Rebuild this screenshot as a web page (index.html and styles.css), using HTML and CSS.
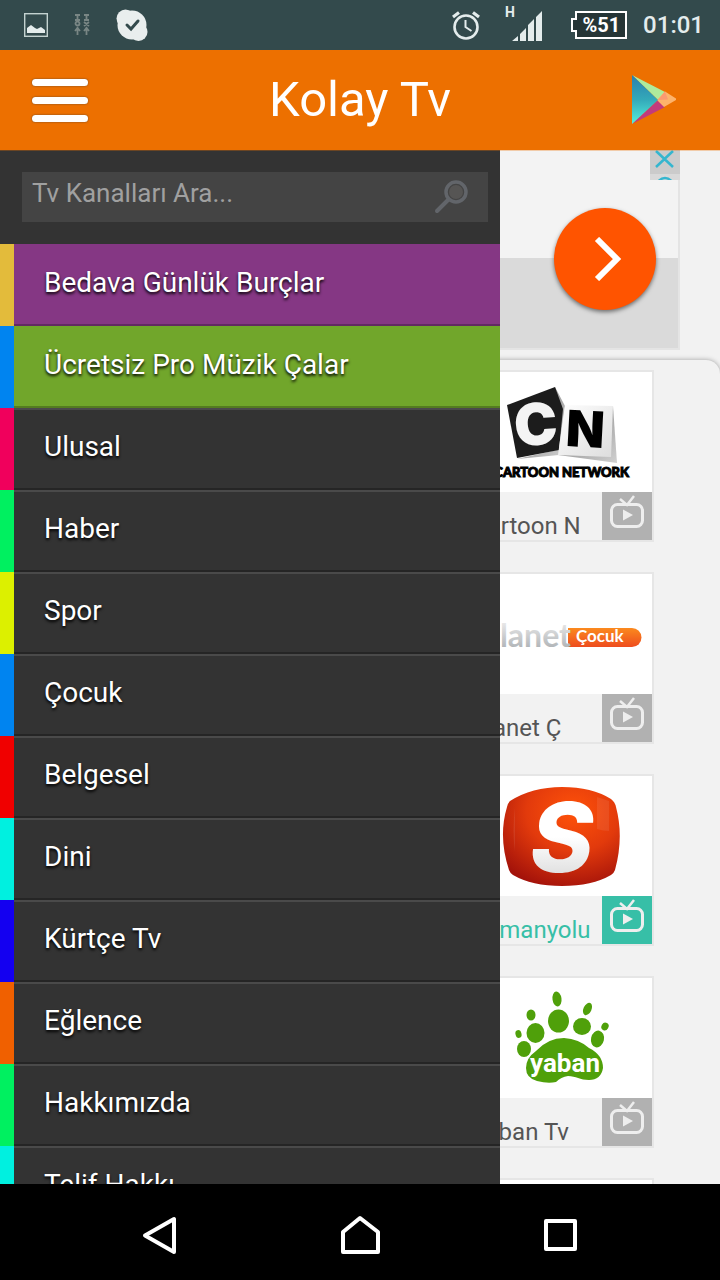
FILE: index.html
```html
<!DOCTYPE html>
<html lang="tr">

<head>
    <meta charset="UTF-8" />
    <meta name="viewport" content="width=device-width, initial-scale=1.0" />
    <title>Kolay Tv</title>
    <link rel="stylesheet" href="styles.css">
</head>

<body>
    <svg class="defs" width="0" height="0" aria-hidden="true">
        <symbol id="tv" viewBox="0 0 50 48">
            <path d="M18 7l7 6l7-9" fill="none" stroke="currentColor" stroke-width="2.500" />
            <rect x="9.500" y="12.500" width="31" height="22" rx="6" fill="none" stroke="currentColor" stroke-width="3" />
            <path d="M21 17.500v11l10-5.500z" fill="currentColor" />
        </symbol>
    </svg>

    <div class="status-bar">
        <div class="status-left">
            <svg width="24" height="24" viewBox="0 0 24 24">
                <rect x="0.700" y="0.700" width="22.600" height="22.600" fill="none" stroke="#c3d2d0" stroke-width="1.400" />
                <path d="M3 20v-5l4-3l4 3l2 1l4-2l4 3v3z" fill="#e4ecec" />
            </svg>
            <svg width="16" height="22" viewBox="0 0 16 22" fill="none" stroke="#798684" stroke-width="1.800">
                <path d="M1 1h5M3.500 1v5M1 6h5M10 1h5M12.500 1v5M10 6h5M10 8l5 4M15 8l-5 4M3.500 13v8M1 17l2.500-3L6 17M12.500 13v8M10 17l2.500-3l2.500 3" />
                <circle cx="3.500" cy="9.500" r="2" />
            </svg>
            <svg width="32" height="32" viewBox="0 0 32 32">
                <circle cx="16" cy="16" r="14.500" fill="#e9eeee" />
                <circle cx="9.500" cy="9.500" r="9" fill="#e9eeee" />
                <circle cx="22.500" cy="23" r="9" fill="#e9eeee" />
                <path d="M11 16l4 4l7-8" fill="none" stroke="#334a4c" stroke-width="3" stroke-linecap="round" />
            </svg>
        </div>
        <div class="status-right">
            <svg width="30" height="30" viewBox="0 0 30 30" fill="none" stroke="#e4ecec">
                <circle cx="15" cy="17" r="11.500" stroke-width="2.600" />
                <path d="M14.500 10v7l6 4" stroke-width="2" />
                <path d="M2 7l6-4.500M28 7l-6-4.500" stroke-width="3.200" />
            </svg>
            <svg class="signal" width="38" height="44" viewBox="0 0 38 44" fill="#e4ecec">
                <text class="signal-type" x="0" y="14">H</text>
                <path d="M7 38l6-5v5zM15 38v-7l6-6v13zM23 38V22l6-6v22zM31 38V14l6-6v30z" />
            </svg>
            <span class="battery">%51</span>
            <span class="clock">01:01</span>
        </div>
    </div>

    <header class="header">
        <button class="menu-btn" type="button" aria-label="Menü">
            <span></span>
            <span></span>
            <span></span>
        </button>
        <h1>Kolay Tv</h1>
        <a class="store-link" href="#" aria-label="Google Play">
            <svg width="46" height="52" viewBox="0 0 46 52">
                <defs>
                    <linearGradient id="playBlue" x1="0" y1="0" x2="0" y2="1">
                        <stop offset="0" stop-color="#2a7fae" />
                        <stop offset="0.500" stop-color="#33a9b9" />
                        <stop offset="1" stop-color="#55f0dc" />
                    </linearGradient>
                </defs>
                <path d="M1 1L34 18L27 26z" fill="#aeeb9c" />
                <path d="M1 50L34 33L27 26z" fill="#c23a7c" />
                <path d="M34 17.500L45 24.500L45 26L33 33L26 26z" fill="#fdb36c" />
                <path d="M27 26l7-8.500l3 8z" fill="#fb9a72" />
                <path d="M1 1L27 26L1 50z" fill="url(#playBlue)" />
            </svg>
        </a>
    </header>

    <main class="screen">
        <section class="content">
            <div class="ad">
                <div class="ad-badge">
                    <svg width="30" height="30" viewBox="0 0 30 30" fill="none" stroke="#35b6cf" stroke-width="2.500">
                        <path d="M6 1l17 16M23 1L6 17" />
                        <path d="M0 24h30v6H0z" fill="#d9d9d9" stroke="none" />
                        <circle cx="15" cy="36" r="8" />
                    </svg>
                </div>
                <button class="ad-btn" type="button" aria-label="İleri">
                    <svg width="28" height="44" viewBox="0 0 28 44" fill="none" stroke="#fff" stroke-width="6">
                        <path d="M3 2l20 20L3 42" />
                    </svg>
                </button>
            </div>

            <div class="channels">
                <a class="card" href="#">
                    <svg class="logo" viewBox="0 0 188 120">
                        <defs>
                            <linearGradient id="cnSide" x1="0" y1="0" x2="1" y2="1">
                                <stop offset="0" stop-color="#777" />
                                <stop offset="1" stop-color="#d0d0d0" />
                            </linearGradient>
                            <linearGradient id="cnFront" x1="0" y1="0" x2="1" y2="1">
                                <stop offset="0" stop-color="#fff" />
                                <stop offset="1" stop-color="#ddd" />
                            </linearGradient>
                        </defs>
                        <path d="M91 15l10 19l-6 49l-42 4l44-10z" fill="url(#cnSide)" />
                        <path d="M43 33l48-18l8 22l-4 41l-42 8z" fill="#1c1c1c" />
                        <text class="cn-letter" x="50" y="73" font-size="58" fill="#f4f4f4" transform="rotate(-4 73 52)">C</text>
                        <path d="M149 34l4 57l-59-8z" fill="url(#cnSide)" />
                        <path d="M101 33l48 1l-2 51l-53-2z" fill="url(#cnFront)" />
                        <text class="cn-letter" x="102" y="75" font-size="50" fill="#000" transform="rotate(3 122 58)">N</text>
                        <text class="cn-name" x="165" y="105" text-anchor="end">CARTOON NETWORK</text>
                    </svg>
                    <div class="card-footer">
                        <span class="card-title">Cartoon N</span>
                        <svg class="card-icon" width="50" height="48"><use href="#tv" /></svg>
                    </div>
                </a>

                <a class="card" href="#">
                    <svg class="logo" viewBox="0 0 188 120">
                        <defs>
                            <linearGradient id="silver" x1="0" y1="0" x2="0" y2="1">
                                <stop offset="0.200" stop-color="#e8e8e8" />
                                <stop offset="1" stop-color="#a3a8ac" />
                            </linearGradient>
                            <linearGradient id="pill" x1="0" y1="0" x2="0" y2="1">
                                <stop offset="0" stop-color="#fb8a1e" />
                                <stop offset="1" stop-color="#ee4c1e" />
                            </linearGradient>
                        </defs>
                        <path d="M104 54h64a9.500 9.500 0 0 1 0 19h-64z" fill="url(#pill)" />
                        <text class="planet" x="107" y="73" text-anchor="end">Planet</text>
                        <text class="planet-kids" x="112" y="68">Çocuk</text>
                    </svg>
                    <div class="card-footer">
                        <span class="card-title">Planet Ç</span>
                        <svg class="card-icon" width="50" height="48"><use href="#tv" /></svg>
                    </div>
                </a>

                <a class="card active" href="#">
                    <svg class="logo" viewBox="0 0 188 120">
                        <defs>
                            <radialGradient id="sRed" cx="0.600" cy="0.250" r="0.800">
                                <stop offset="0" stop-color="#ff5209" />
                                <stop offset="0.500" stop-color="#e23a0c" />
                                <stop offset="1" stop-color="#a3120a" />
                            </radialGradient>
                            <linearGradient id="sWhite" x1="0" y1="0" x2="0" y2="1">
                                <stop offset="0.500" stop-color="#fff" />
                                <stop offset="1" stop-color="#cfcfcf" />
                            </linearGradient>
                        </defs>
                        <path d="M46 25Q68 11 98 11Q128 11 147 23Q151 26 152 31Q160 61 151 94Q150 97 147 99Q128 110 98 110Q68 110 49 99Q46 97 45 94Q34 61 43 31Q44 27 46 25z" fill="url(#sRed)" />
                        <path d="M51 31q-3 25 0 45V30zM145 25v30q-6 0-12-2V21z" fill="#fff" opacity="0.080" />
                        <text class="s-letter" x="98" y="96" text-anchor="middle" fill="url(#sWhite)">S</text>
                    </svg>
                    <div class="card-footer">
                        <span class="card-title">Samanyolu</span>
                        <svg class="card-icon" width="50" height="48"><use href="#tv" /></svg>
                    </div>
                </a>

                <a class="card" href="#">
                    <svg class="logo" viewBox="0 0 188 120" fill="#4fa00a">
                        <ellipse cx="93" cy="21" rx="4.500" ry="7.500" transform="rotate(-8 93 21)" />
                        <ellipse cx="94.500" cy="43" rx="10.500" ry="11.500" />
                        <ellipse cx="67" cy="37" rx="4.500" ry="5.500" />
                        <ellipse cx="71.500" cy="55" rx="9" ry="10" />
                        <ellipse cx="54.500" cy="56" rx="3" ry="4" transform="rotate(-15 54.500 56)" />
                        <ellipse cx="60" cy="71" rx="7" ry="8" />
                        <ellipse cx="123.500" cy="31" rx="4" ry="6.500" transform="rotate(25 123.500 31)" />
                        <ellipse cx="118" cy="48.500" rx="9" ry="8.500" />
                        <ellipse cx="141" cy="48.500" rx="3.500" ry="4" transform="rotate(30 141 48.500)" />
                        <ellipse cx="133.500" cy="61" rx="6.500" ry="8.500" transform="rotate(12 133.500 61)" />
                        <path d="M62 90Q62 80 72 73Q84 60 100 60Q115 61 125 70Q139 77 139 90Q137 102 125 102C116 102 112 98 104 98Q97 99 92 104Q84 106 73 103Q62 100 62 90z" />
                        <text class="yaban" x="101" y="94" text-anchor="middle">yaban</text>
                    </svg>
                    <div class="card-footer">
                        <span class="card-title">Yaban Tv</span>
                        <svg class="card-icon" width="50" height="48"><use href="#tv" /></svg>
                    </div>
                </a>

                <div class="card">
                    <svg class="logo" viewBox="0 0 188 120"></svg>
                </div>
            </div>
        </section>

        <nav class="drawer">
            <form class="search">
                <input type="search" placeholder="Tv Kanalları Ara..." aria-label="Tv Kanalları Ara" />
                <button type="submit" aria-label="Ara">
                    <svg width="34" height="34" viewBox="0 0 34 34" fill="none" stroke="#62656a">
                        <circle cx="22" cy="12" r="7" fill="#565554" stroke="none" />
                        <circle cx="22" cy="12" r="10" stroke-width="3.500" />
                        <path d="M14 20L3 31" stroke-width="4" stroke-linecap="round" />
                    </svg>
                </button>
            </form>
            <ul class="menu">
                <li class="yellow"><a class="purple-bg" href="#">Bedava Günlük Burçlar</a></li>
                <li class="blue"><a class="green-bg" href="#">Ücretsiz Pro Müzik Çalar</a></li>
                <li class="pink"><a href="#">Ulusal</a></li>
                <li class="green"><a href="#">Haber</a></li>
                <li class="lime"><a href="#">Spor</a></li>
                <li class="blue"><a href="#">Çocuk</a></li>
                <li class="red"><a href="#">Belgesel</a></li>
                <li class="cyan"><a href="#">Dini</a></li>
                <li class="navy"><a href="#">Kürtçe Tv</a></li>
                <li class="orange"><a href="#">Eğlence</a></li>
                <li class="green"><a href="#">Hakkımızda</a></li>
                <li class="cyan"><a href="#">Telif Hakkı</a></li>
            </ul>
        </nav>
    </main>

    <div class="nav-bar">
        <button type="button" aria-label="Geri">
            <svg width="40" height="40" viewBox="0 0 40 40" fill="none" stroke="#fff" stroke-width="4" stroke-linejoin="round">
                <path d="M34 4v33L5 20.500z" />
            </svg>
        </button>
        <button type="button" aria-label="Ana ekran">
            <svg width="40" height="40" viewBox="0 0 40 40" fill="none" stroke="#fff" stroke-width="4" stroke-linejoin="round">
                <path d="M3 37V17L20 3l18 14v20z" />
            </svg>
        </button>
        <button type="button" aria-label="Son uygulamalar">
            <svg width="40" height="40" viewBox="0 0 40 40" fill="none" stroke="#fff" stroke-width="4" stroke-linejoin="round">
                <path d="M6 6h29v28H6z" />
            </svg>
        </button>
    </div>
</body>

</html>
```
FILE: styles.css
```css
*,
*::before,
*::after {
    box-sizing: border-box;
    margin: 0;
    padding: 0;
}

body {
    display: flex;
    flex-direction: column;
    height: 100vh;
    font-family: Roboto, sans-serif;
    background: #f2f2f2;
    overflow: hidden;
}

button {
    border: none;
    background: none;
    cursor: pointer;
}

a {
    color: inherit;
    text-decoration: none;
}

svg {
    display: block;
}

.defs {
    position: absolute;
}

/* status bar */
.status-bar {
    display: flex;
    justify-content: space-between;
    align-items: center;
    flex: none;
    height: 50px;
    padding: 0 16px 0 24px;
    background: #334a4c;
    color: #e4ecec;
}

.status-left {
    display: flex;
    align-items: center;
    gap: 26px;
}

.status-right {
    display: flex;
    align-items: center;
    gap: 16px;
}

.signal {
    margin: 0 12px 0 8px;
}

.signal-type {
    font-size: 14px;
    font-weight: 700;
}

.battery {
    position: relative;
    margin-left: 4px;
    padding: 0 5px;
    border: 2px solid #fff;
    background: #253536;
    color: #fff;
    font-size: 20px;
    font-weight: 700;
    line-height: 24px;
}

.battery::before {
    content: '';
    position: absolute;
    top: 5px;
    left: -6px;
    width: 6px;
    height: 14px;
    border: 2px solid #fff;
    border-right: none;
    background: #253536;
}

.clock {
    font-size: 24px;
    font-weight: 500;
}

/* header */
.header {
    position: relative;
    z-index: 1;
    display: grid;
    grid-template-columns: 1fr auto 1fr;
    align-items: center;
    flex: none;
    height: 100px;
    padding: 0 30px;
    background: #ed7000;
    box-shadow: 0 1px 0 rgba(237, 112, 0, 0.3);
}

.header h1 {
    color: #fff;
    font-size: 49px;
    font-weight: 400;
    line-height: 56px;
}

.menu-btn {
    display: flex;
    flex-direction: column;
    gap: 11px;
    width: 60px;
    padding: 2px;
}

.menu-btn span {
    height: 7px;
    border-radius: 4px;
    background: #fff;
    box-shadow: 0 0 2px rgba(60, 60, 60, 0.8);
}

.store-link {
    justify-self: end;
    margin-right: 13px;
}

/* main area */
.screen {
    position: relative;
    flex: 1;
    min-height: 0;
    overflow: hidden;
}

.content {
    display: flex;
    flex-direction: column;
    gap: 10px;
}

.ad {
    position: relative;
    display: flex;
    justify-content: flex-end;
    align-items: center;
    height: 200px;
    margin-right: 40px;
    padding: 20px 22px 0 0;
    border: solid #e4e4e4;
    border-width: 0 2px 2px 0;
    background: linear-gradient(#f3f3f3 108px, #dadada 108px);
}

.ad-badge {
    position: absolute;
    top: 0;
    right: -2px;
    background: #cbcbcb;
}

.ad-btn {
    display: flex;
    justify-content: center;
    align-items: center;
    width: 102px;
    height: 102px;
    padding-left: 6px;
    border-radius: 50%;
    background: #ff5400;
    box-shadow: 0 2px 4px rgba(0, 0, 0, 0.5);
}

.channels {
    display: flex;
    flex-direction: column;
    align-items: flex-end;
    gap: 30px;
    padding: 10px 66px 0 0;
    border-radius: 0 14px 0 0;
    background: #f2f2f2;
    box-shadow: 0 0 5px rgba(0, 0, 0, 0.35);
}

.card {
    width: 192px;
    border: 2px solid #e6e6e6;
    color: #555;
}

.logo {
    width: 100%;
    height: 120px;
    background: #fff;
}

.card-footer {
    display: flex;
    justify-content: space-between;
    align-items: flex-end;
    padding-left: 8px;
}

.card-title {
    font-size: 24px;
    line-height: 28px;
}

.card-icon {
    background: #b1b1b1;
    color: #eee;
}

.card.active {
    color: #37bfa7;
}

.active .card-icon {
    background: #37bfa7;
}

/* channel logos */
.cn-letter {
    font-family: Inter, sans-serif;
    font-weight: 900;
}

.cn-name {
    font-family: Lato, sans-serif;
    font-size: 13px;
    font-weight: 900;
    fill: #000;
    stroke: #000;
    stroke-width: 1px;
}

.planet {
    font-family: Lato, sans-serif;
    font-size: 32px;
    font-weight: 700;
    fill: url(#silver);
}

.planet-kids {
    font-family: Lato, sans-serif;
    font-size: 17px;
    font-weight: 700;
    fill: #fff;
}

.s-letter {
    font-family: Inter, sans-serif;
    font-size: 96px;
    font-style: italic;
    font-weight: 800;
}

.yaban {
    font-size: 26px;
    font-weight: 700;
    fill: #fff;
}

/* drawer */
.drawer {
    position: absolute;
    top: 0;
    left: 0;
    width: 500px;
    max-width: 100%;
    height: 100%;
    overflow: hidden;
    background: #333;
}

.search {
    display: flex;
    height: 50px;
    margin: 22px 12px 22px 22px;
    background: #444;
}

.search input {
    flex: 1;
    min-width: 0;
    padding: 0 10px 8px;
    border: none;
    outline: none;
    background: none;
    color: #ddd;
    font-family: inherit;
    font-size: 26px;
    -webkit-appearance: none;
    appearance: none;
}

.search input::placeholder {
    color: #a0a0a0;
}

.search button {
    padding: 0 20px;
}

.menu {
    list-style: none;
}

.menu li {
    height: 82px;
    border-left: 14px solid #333;
}

.menu a {
    display: block;
    height: 82px;
    padding-left: 30px;
    border-top: 2px solid #4a4a4a;
    border-bottom: 2px solid #252525;
    color: #fff;
    font-size: 28px;
    line-height: 73px;
    text-shadow: 0 2px 3px #000;
}

.menu .purple-bg {
    border-top-color: #853784;
    border-bottom-color: #622a62;
    background: #853784;
}

.menu .green-bg {
    border-top-color: #71a62b;
    border-bottom-color: #547c20;
    background: #71a62b;
}

.menu .yellow {
    border-color: #e3bb3b;
}

.menu .blue {
    border-color: #0084f0;
}

.menu .pink {
    border-color: #f0005c;
}

.menu .green {
    border-color: #00f060;
}

.menu .lime {
    border-color: #dcf000;
}

.menu .red {
    border-color: #f00000;
}

.menu .cyan {
    border-color: #00f0e0;
}

.menu .navy {
    border-color: #1400f0;
}

.menu .orange {
    border-color: #f06000;
}

/* system navigation */
.nav-bar {
    display: grid;
    grid-template-columns: repeat(3, 1fr);
    flex: none;
    height: 96px;
    padding: 6px 60px 0;
    background: #000;
}

.nav-bar button {
    display: flex;
    justify-content: center;
    align-items: center;
}
```
